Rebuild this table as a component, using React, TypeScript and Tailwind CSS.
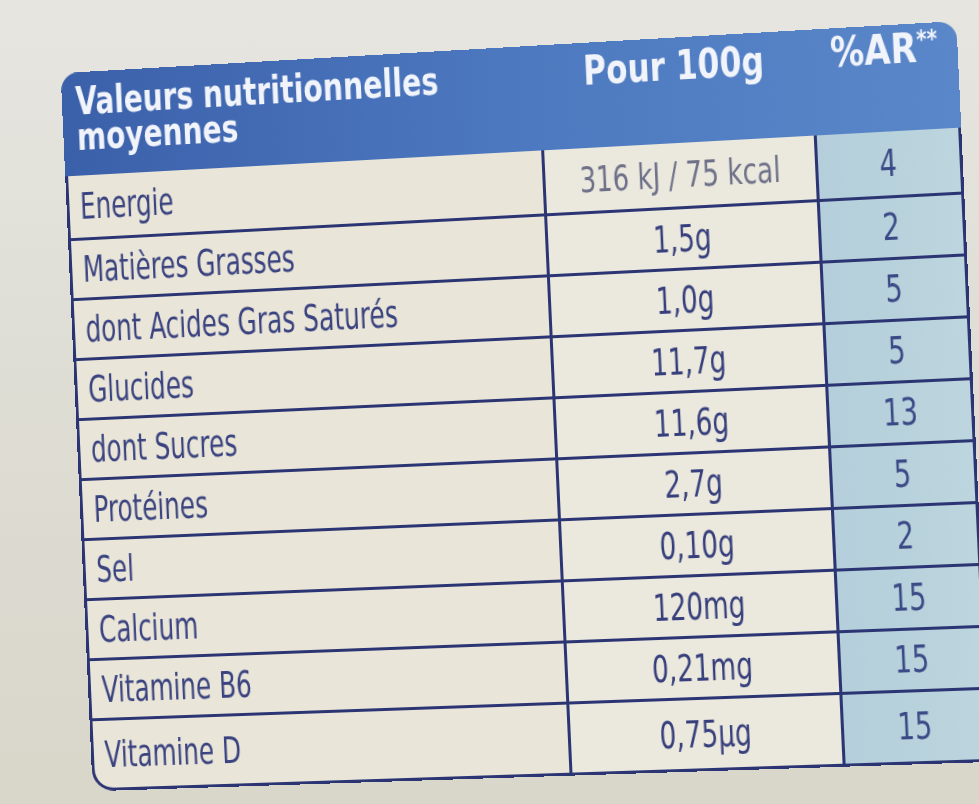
const ROWS: { label: string; value: string; ar: string }[] = [
  { label: "Energie", value: "316 kJ / 75 kcal", ar: "4" },
  { label: "Matières Grasses", value: "1,5g", ar: "2" },
  { label: "dont Acides Gras Saturés", value: "1,0g", ar: "5" },
  { label: "Glucides", value: "11,7g", ar: "5" },
  { label: "dont Sucres", value: "11,6g", ar: "13" },
  { label: "Protéines", value: "2,7g", ar: "5" },
  { label: "Sel", value: "0,10g", ar: "2" },
  { label: "Calcium", value: "120mg", ar: "15" },
  { label: "Vitamine B6", value: "0,21mg", ar: "15" },
  { label: "Vitamine D", value: "0,75µg", ar: "15" },
];

function rowHeight(i: number) {
  if (i === 0) return "h-[66px]";
  if (i === ROWS.length - 1) return "h-[68px]";
  return "h-[61px]";
}

export default function App() {
  return (
    <div className="w-full h-screen overflow-hidden bg-gradient-to-b from-[#e6e5e0] via-[#deddd4] to-[#d9d6ca] pt-[47px] pl-[69px] font-['DejaVu_Sans_Condensed','DejaVu_Sans',sans-serif]">
      <div className="w-[898px] [transform:perspective(1000px)_rotateY(-2deg)_rotate(-2.6deg)]">
        {/* header band */}
        <div className="flex h-[105px] rounded-t-[18px] bg-gradient-to-r from-[#3b60aa] via-[#4c78bf] to-[#5a87c9] text-[#f1f4fa]">
          <div className="w-[484px] pl-[14px] pt-[12px] text-[39px] font-bold leading-[36px]">
            <div className="inline-block origin-left scale-x-[0.82] whitespace-nowrap">Valeurs nutritionnelles</div>
            <div className="block origin-left scale-x-[0.82]">moyennes</div>
          </div>
          <div className="w-[270px] pt-[8px] text-center text-[40px] font-bold leading-[40px]">
            <span className="inline-block scale-x-[0.86] whitespace-nowrap">Pour 100g</span>
          </div>
          <div className="flex-1 pt-[4px] text-center text-[41px] font-bold leading-[40px]">
            <span className="inline-block scale-x-[0.9] whitespace-nowrap">
              %AR<sup className="text-[24px] -top-[14px]">**</sup>
            </span>
          </div>
        </div>

        {/* body */}
        <div className="border-x-[3px] border-b-[3px] border-[#2c3573] rounded-bl-[22px] rounded-br-[8px] overflow-hidden bg-[#e9e5d8]">
          {ROWS.map((r, i) => (
            <div
              key={r.label}
              className={`grid grid-cols-[481px_270px_1fr] ${rowHeight(i)} ${i < ROWS.length - 1 ? "border-b-[3px] border-[#2c3573]" : ""}`}
            >
              <div
                className={`flex pl-[11px] text-[38px] text-[#3a4380] ${i === ROWS.length - 1 ? "items-start pt-[6px]" : "items-center"}`}
              >
                <span className="inline-block origin-left scale-x-[0.74] whitespace-nowrap">{r.label}</span>
              </div>
              <div
                className={`flex items-center justify-center border-l-[3px] border-[#2c3573] bg-[#ebe8de] ${i === 0 ? "text-[36px] text-[#6d7088]" : "text-[38px] text-[#363f7c]"}`}
              >
                <span className={`inline-block whitespace-nowrap ${i === 0 ? "scale-x-[0.8]" : "scale-x-[0.76]"}`}>{r.value}</span>
              </div>
              <div className="flex items-center justify-center border-l-[3px] border-[#2c3573] bg-gradient-to-r from-[#b4cfdb] to-[#bcd5de] text-[37px] text-[#394a86]">
                <span className="inline-block scale-x-[0.8]">{r.ar}</span>
              </div>
            </div>
          ))}
        </div>
      </div>
    </div>
  );
}
